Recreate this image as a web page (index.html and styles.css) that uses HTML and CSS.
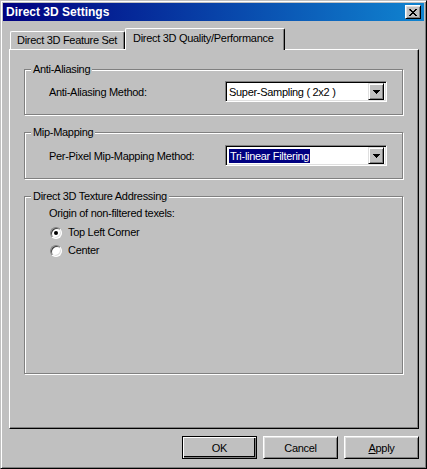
FILE: index.html
```html
<!doctype html>
<html>
<head>
<meta charset="utf-8">
<meta name="viewport" content="width=device-width, initial-scale=1">
<link rel="stylesheet" href="styles.css">
</head>
<body>
<div class="window">
    <div class="titlebar">
        <span class="titlebar__text">Direct 3D Settings</span>
        <span class="titlebar__close">
            <svg width="8" height="7" viewBox="0 0 8 7"><path d="M0 0h2v1h1v1h2v-1h1v-1h2v1h-1v1h-1v1h-1v1h1v1h1v1h1v1h-2v-1h-1v-1h-2v1h-1v1h-2v-1h1v-1h1v-1h1v-1h-1v-1h-1z" fill="#000"/></svg>
        </span>
    </div>

    <div class="tabs">
        <div class="tabs__tab">Direct 3D Feature Set</div>
        <div class="tabs__tab tabs__tab--active">Direct 3D Quality/Performance</div>
    </div>

    <div class="panel">
        <fieldset class="group group--aa">
            <legend class="group__title">Anti-Aliasing</legend>
            <div class="group__row">
                <span class="group__label">Anti-Aliasing Method:</span>
                <div class="combo">
                    <span class="combo__text">Super-Sampling ( 2x2 )</span>
                    <span class="combo__btn"><svg width="7" height="4" viewBox="0 0 7 4"><path d="M0 0h7v1H0zM1 1h5v1H1zM2 2h3v1H2zM3 3h1v1H3z" fill="#000"/></svg></span>
                </div>
            </div>
        </fieldset>

        <fieldset class="group group--mip">
            <legend class="group__title">Mip-Mapping</legend>
            <div class="group__row">
                <span class="group__label">Per-Pixel Mip-Mapping Method:</span>
                <div class="combo">
                    <span class="combo__text"><span class="combo__selected">Tri-linear Filtering</span></span>
                    <span class="combo__btn"><svg width="7" height="4" viewBox="0 0 7 4"><path d="M0 0h7v1H0zM1 1h5v1H1zM2 2h3v1H2zM3 3h1v1H3z" fill="#000"/></svg></span>
                </div>
            </div>
        </fieldset>

        <fieldset class="group group--tex">
            <legend class="group__title">Direct 3D Texture Addressing</legend>
            <div class="group__caption">Origin of non-filtered texels:</div>
            <div class="radios">
                <div class="radios__item"><span class="radio radio--checked"></span>Top Left Corner</div>
                <div class="radios__item"><span class="radio"></span>Center</div>
            </div>
        </fieldset>
    </div>

    <div class="buttons">
        <button class="btn btn--default">OK</button>
        <button class="btn">Cancel</button>
        <button class="btn"><u>A</u>pply</button>
    </div>
</div>
</body>
</html>
```

FILE: styles.css
```css
* {
    box-sizing: border-box;
}
body {
    margin: 0;
    font-family: "Liberation Sans", Arial, sans-serif;
    font-size: 11px;
    letter-spacing: -0.3px;
    color: #000;
    background-color: #c0c0c0;
}
.window {
    width: 427px;
    height: 469px;
    display: flex;
    flex-direction: column;
    background-color: #c0c0c0;
    border: 1px solid;
    border-color: #c0c0c0 #000 #000 #c0c0c0;
    box-shadow: inset 1px 1px #fff, inset -1px -1px #808080;
    padding: 2px;
}
.titlebar {
    height: 18px;
    display: flex;
    align-items: center;
    justify-content: space-between;
    padding: 0 3px 0 3px;
    background: linear-gradient(to right, #000080, #1084d0);
    color: #fff;
    font-weight: bold;
    font-size: 12px;
    letter-spacing: 0;
}
.titlebar__close {
    width: 16px;
    height: 14px;
    display: flex;
    align-items: center;
    justify-content: center;
    background-color: #c0c0c0;
    border: 1px solid;
    border-color: #fff #000 #000 #fff;
    box-shadow: inset 1px 1px #dfdfdf, inset -1px -1px #808080;
}
.tabs {
    display: flex;
    align-items: flex-end;
    height: 22px;
    margin: 7px 0 -1px 7px;
    position: relative;
    z-index: 1;
}
.tabs__tab {
    height: 18px;
    width: 115px;
    margin-bottom: 1px;
    padding: 2px 0 0 6px;
    background-color: #c0c0c0;
    border-top: 1px solid #fff;
    border-left: 1px solid #fff;
    border-right: 1px solid #000;
    border-top-left-radius: 2px;
    border-top-right-radius: 2px;
    box-shadow: inset -1px 0 #808080;
    white-space: nowrap;
}
.tabs__tab--active {
    height: 22px;
    width: 160px;
    margin-bottom: 0;
    padding: 3px 0 0 7px;
}
.panel {
    height: 380px;
    margin: 0 5px 0 6px;
    padding: 13px 15px 0 14px;
    border: 1px solid;
    border-color: #fff #000 #000 #fff;
    box-shadow: inset -1px -1px #808080;
}
.group {
    margin: 0;
    padding: 0;
    min-width: 0;
    border: 1px solid #808080;
    box-shadow: inset 1px 1px #fff, 1px 1px #fff;
}
.group + .group {
    margin-top: 11px;
}
.group__title {
    margin-left: 6px;
    padding: 0 2px;
    line-height: 13px;
    background-color: #c0c0c0;
}
.group__row {
    display: flex;
    align-items: center;
    margin: 5px 0 12px;
}
.group--mip .group__row {
    margin-top: 6px;
}
.group__label {
    flex: 0 0 200px;
    padding-left: 24px;
}
.group--tex {
    height: 184px;
}
.group__caption {
    margin: 4px 0 0 24px;
    line-height: 13px;
}
.combo {
    width: 162px;
    height: 21px;
    display: flex;
    align-items: center;
    padding: 2px;
    background-color: #fff;
    border: 1px solid;
    border-color: #808080 #fff #fff #808080;
    box-shadow: inset 1px 1px #000, inset -1px -1px #dfdfdf;
}
.combo__text {
    flex: 1;
    white-space: nowrap;
    padding-left: 1px;
}
.combo__selected {
    background-color: #000080;
    color: #fff;
    padding: 1px 1px;
}
.combo__btn {
    width: 16px;
    height: 17px;
    display: flex;
    align-items: center;
    justify-content: center;
    background-color: #c0c0c0;
    border: 1px solid;
    border-color: #dfdfdf #000 #000 #dfdfdf;
    box-shadow: inset 1px 1px #fff, inset -1px -1px #808080;
}
.radios {
    margin: 6px 0 0 25px;
    display: flex;
    flex-direction: column;
    gap: 5px;
}
.radios__item {
    display: flex;
    align-items: center;
    gap: 6px;
    line-height: 13px;
}
.radio {
    width: 12px;
    height: 12px;
    display: flex;
    align-items: center;
    justify-content: center;
    border-radius: 50%;
    background-color: #fff;
    border: 1px solid;
    border-color: #808080 #fff #fff #808080;
    box-shadow: inset 1px 1px #404040, inset -1px -1px #dfdfdf;
}
.radio--checked::after {
    content: '';
    width: 4px;
    height: 4px;
    border-radius: 50%;
    background-color: #000;
}
.buttons {
    display: flex;
    justify-content: flex-end;
    gap: 6px;
    margin: 7px 5px 0 0;
}
.btn {
    width: 75px;
    height: 23px;
    padding: 0;
    font-family: inherit;
    font-size: 11px;
    letter-spacing: -0.3px;
    color: #000;
    background-color: #c0c0c0;
    border: 1px solid;
    border-color: #fff #000 #000 #fff;
    box-shadow: inset 1px 1px #dfdfdf, inset -1px -1px #808080;
}
.btn--default {
    border-color: #000;
    box-shadow: inset 1px 1px #fff, inset -1px -1px #808080, inset -2px -2px #000;
}
```
